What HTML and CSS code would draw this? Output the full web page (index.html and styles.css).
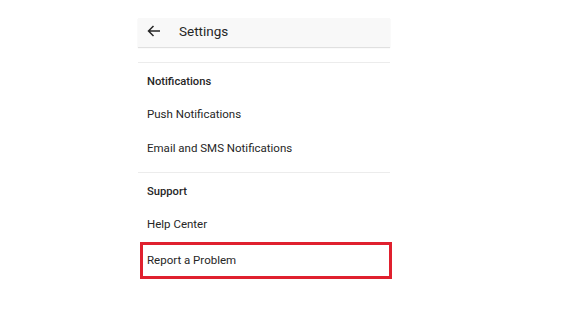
FILE: index.html
```html
<!DOCTYPE html>
<html>
<head>
<meta charset="utf-8">
<link rel="stylesheet" href="styles.css">
</head>
<body>
<div class="screen">
  <div class="header">
    <svg class="back" width="14" height="12" viewBox="0 0 14 12"><path d="M13 6H1.5M6.5 1L1.5 6l5 5" fill="none" stroke="#262626" stroke-width="1.5"/></svg>
    <span class="title">Settings</span>
  </div>
  <div class="gap"></div>
  <div class="section">
    <div class="heading">Notifications</div>
    <div class="item">Push Notifications</div>
    <div class="item">Email and SMS Notifications</div>
  </div>
  <div class="section">
    <div class="heading">Support</div>
    <div class="item">Help Center</div>
    <div class="item highlighted">Report a Problem</div>
  </div>
</div>
</body>
</html>
```
FILE: styles.css
```css
html, body { margin: 0; padding: 0; background: #fff; }
body { font-family: Roboto, "Noto Sans", sans-serif; color: #262626; }
.screen { width: 252px; margin-left: 138px; padding-top: 18px; }
.header {
  height: 29px;
  box-sizing: border-box;
  background: #f8f8f8;
  display: flex;
  align-items: flex-start;
  padding-left: 9px;
  padding-top: 5px;
  box-shadow: 0 1px 1px rgba(0,0,0,0.12);
}
.back { margin-right: 18px; margin-top: 2px; }
.title { font-size: 13.5px; line-height: 16px; }
.gap { height: 15px; }
.section { border-top: 1px solid #ececec; padding-top: 11px; padding-bottom: 7px; }
.heading { font-size: 11.2px; font-weight: 500; height: 16px; line-height: 16px; padding-left: 9px; margin-bottom: 7px; }
.item { font-size: 11.5px; height: 34px; line-height: 34px; padding-left: 9px; }
.highlighted { border: 3px solid #e0202e; margin: 1px -2px 0 2px; padding-left: 4px; height: 31px; line-height: 31px; }
```
